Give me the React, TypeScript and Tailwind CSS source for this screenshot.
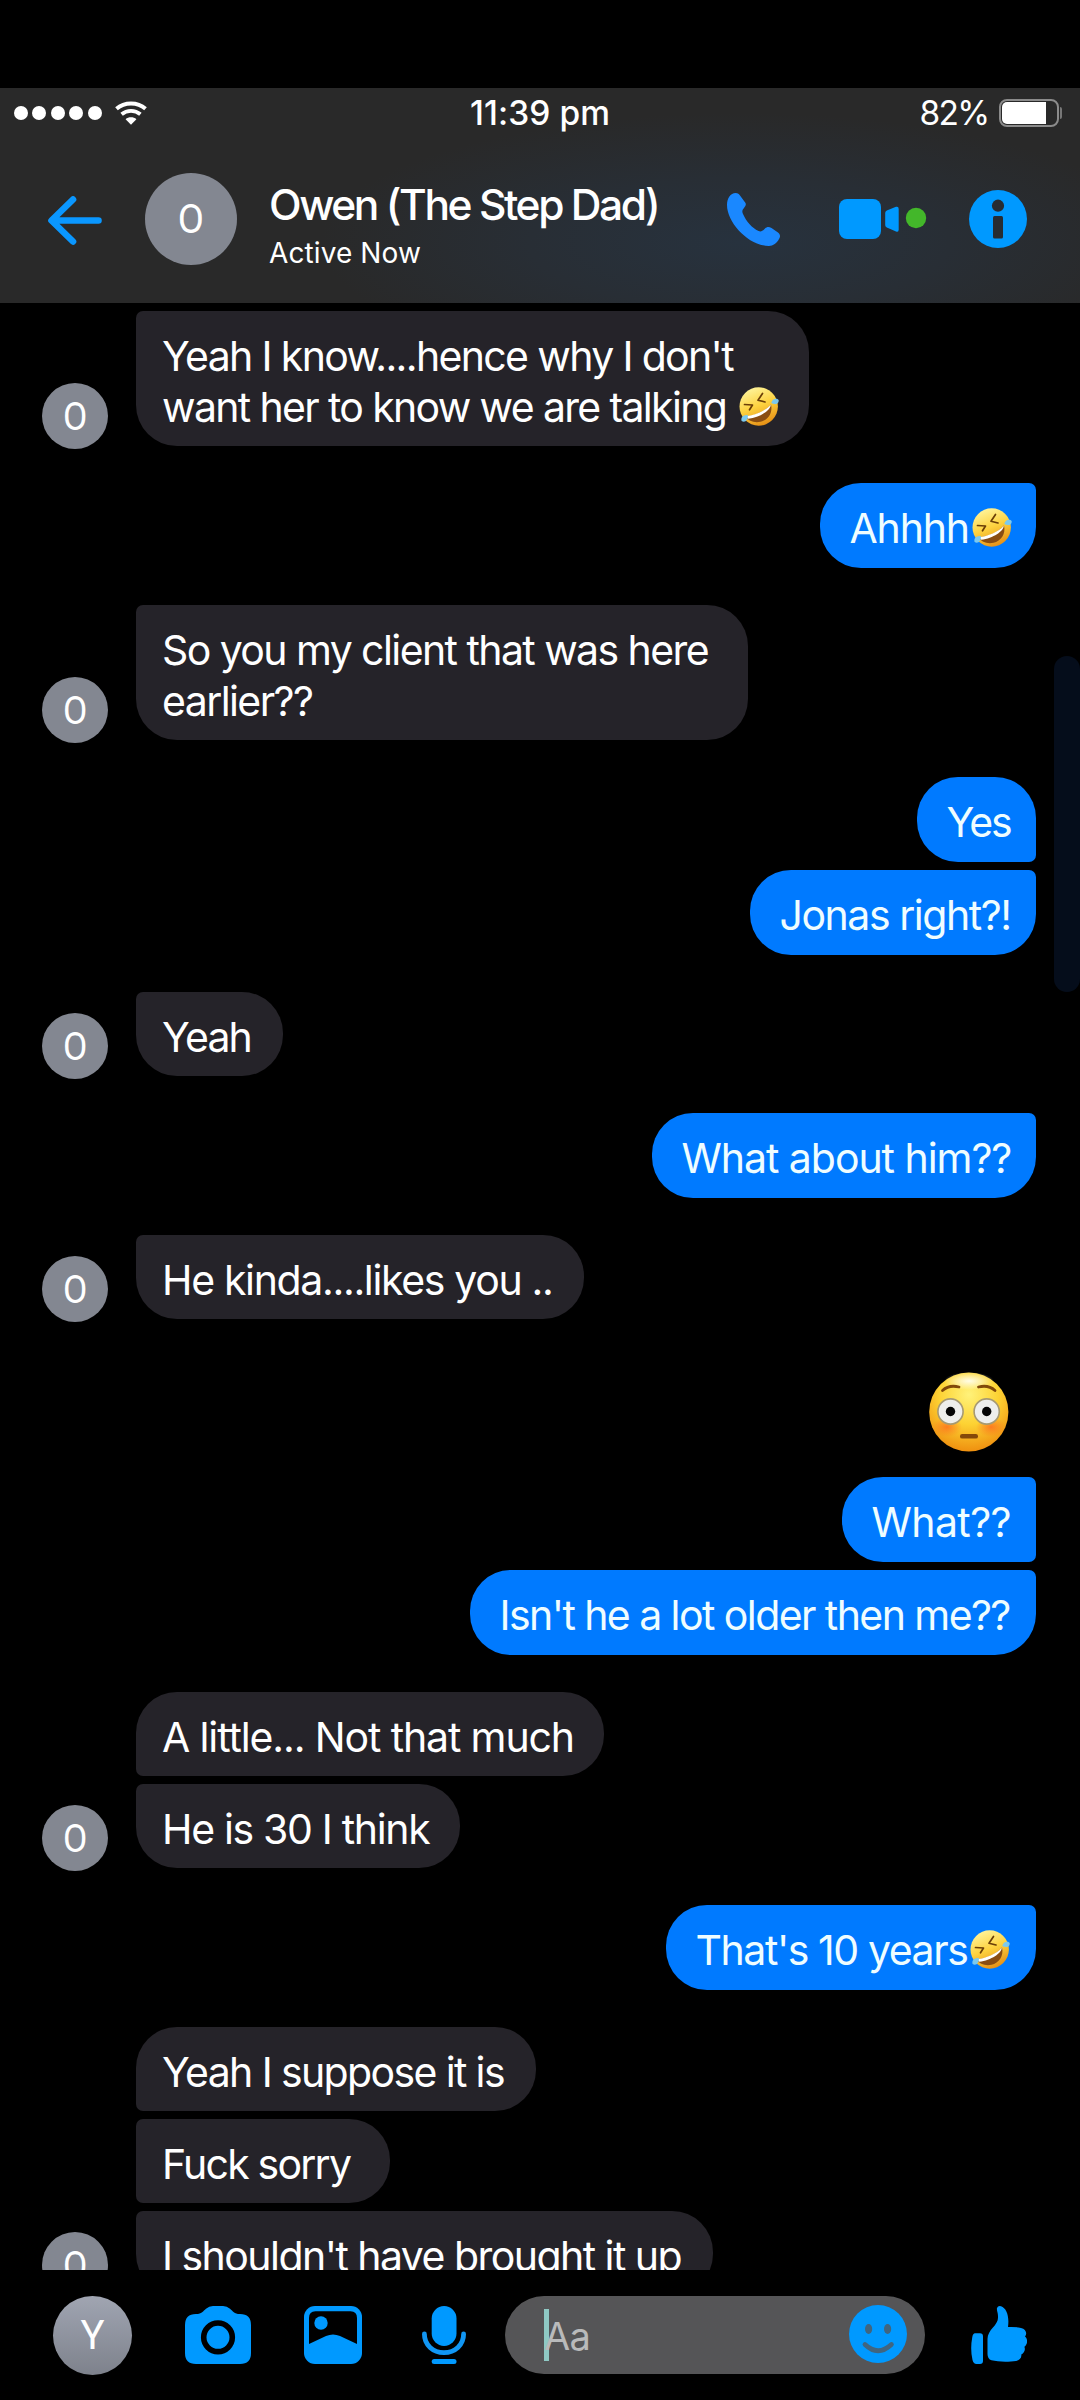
import type { ReactNode } from "react"

type Message = {
  lines: string[]
  // bubble width and letter spacing
  box: string
  emoji?: boolean
}

type Group = {
  from: "owen" | "me"
  sticker?: boolean
  messages: Message[]
}

const groups: Group[] = [
  {
    from: "owen",
    messages: [
      { lines: ["Yeah I know....hence why I don't", "want her to know we are talking "], box: "w-[673px] tracking-[-1.65px]", emoji: true },
    ],
  },
  { from: "me", messages: [{ lines: ["Ahhhh"], box: "w-[216px] tracking-[-1.2px]", emoji: true }] },
  {
    from: "owen",
    messages: [{ lines: ["So you my client that was here", "earlier??"], box: "w-[612px] tracking-[-1.58px]" }],
  },
  {
    from: "me",
    messages: [
      { lines: ["Yes"], box: "w-[119px] tracking-[-2px]" },
      { lines: ["Jonas right?!"], box: "w-[286px] tracking-[-1.45px]" },
    ],
  },
  { from: "owen", messages: [{ lines: ["Yeah"], box: "w-[147px] tracking-[-1.8px]" }] },
  { from: "me", messages: [{ lines: ["What about him??"], box: "w-[384px] tracking-[-1.05px]" }] },
  { from: "owen", messages: [{ lines: ["He kinda....likes you .."], box: "w-[448px] tracking-[-1.34px]" }] },
  {
    from: "me",
    sticker: true,
    messages: [
      { lines: ["What??"], box: "w-[194px] tracking-[-0.6px]" },
      { lines: ["Isn't he a lot older then me??"], box: "w-[566px] tracking-[-1.57px]" },
    ],
  },
  {
    from: "owen",
    messages: [
      { lines: ["A little... Not that much"], box: "w-[468px] tracking-[-1.13px]" },
      { lines: ["He is 30 I think"], box: "w-[324px] tracking-[-1.33px]" },
    ],
  },
  { from: "me", messages: [{ lines: ["That's 10 years"], box: "w-[370px] tracking-[-1.43px]", emoji: true }] },
  {
    from: "owen",
    messages: [
      { lines: ["Yeah I suppose it is"], box: "w-[400px] tracking-[-1.63px]" },
      { lines: ["Fuck sorry"], box: "w-[254px] tracking-[-1.78px]" },
      { lines: ["I shouldn't have brought it up"], box: "w-[577px] tracking-[-1.54px]" },
    ],
  },
]

function LaughEmoji() {
  return (
    <svg viewBox="0 0 40 40" className="inline-block w-10 h-10 ml-[3px] align-[-5px]" role="img" aria-label="🤣">
      <defs>
        <linearGradient id="laughFace" x1="0.25" y1="0" x2="0.65" y2="1">
          <stop offset="0" stopColor="#fff6a0" />
          <stop offset="0.5" stopColor="#fdd23f" />
          <stop offset="1" stopColor="#e58d14" />
        </linearGradient>
      </defs>
      <circle cx="19.7" cy="19.5" r="19.2" fill="url(#laughFace)" />
      <path d="M5.5 17.5 L13.5 18 L10.5 22.8" fill="none" stroke="#6b3f08" strokeWidth="1.7" strokeLinejoin="round" strokeLinecap="round" />
      <path d="M23.5 6.5 L19 13.2 L26 15" fill="none" stroke="#6b3f08" strokeWidth="1.7" strokeLinejoin="round" strokeLinecap="round" />
      <path d="M7 29.5 C15 29 27 24 32 17.5 C34 26 29 33 21.5 34.8 C15 36 9.5 34 7 29.5Z" fill="#8a4d12" />
      <path d="M7.5 29.3 C15 28.5 27 23.8 31.7 17.8 C32 23 21 30.5 9.4 31.8 C8.4 31 8 30.5 7.5 29.3Z" fill="#fff" />
      <path d="M32.3 16 C33 11.5 38 10.5 39.6 13 C40.5 16.5 36 18.5 32.3 16Z" fill="#7cc9ee" />
      <path d="M8.8 28 C4 27.5 1.5 30.5 2.6 34 C6 36 9.5 33 8.8 28Z" fill="#7cc9ee" />
    </svg>
  )
}

function FlushedEmoji() {
  return (
    <svg viewBox="0 0 80 80" className="w-20 h-20" role="img" aria-label="😳">
      <defs>
        <radialGradient id="flushedFace" cx="0.5" cy="0.28" r="0.75">
          <stop offset="0" stopColor="#fff27a" />
          <stop offset="0.5" stopColor="#fdd233" />
          <stop offset="1" stopColor="#ee8a0c" />
        </radialGradient>
        <radialGradient id="flushedShine" cx="0.5" cy="0.5" r="0.5">
          <stop offset="0" stopColor="#fffde6" />
          <stop offset="1" stopColor="#fffde6" stopOpacity="0" />
        </radialGradient>
        <radialGradient id="flushedCheek" cx="0.5" cy="0.5" r="0.5">
          <stop offset="0" stopColor="#ff5a1e" stopOpacity="0.65" />
          <stop offset="1" stopColor="#ff6a1e" stopOpacity="0" />
        </radialGradient>
      </defs>
      <circle cx="39.8" cy="40" r="39.6" fill="url(#flushedFace)" />
      <ellipse cx="40" cy="9" rx="25" ry="9" fill="url(#flushedShine)" />
      <ellipse cx="18" cy="55" rx="15" ry="10" fill="url(#flushedCheek)" />
      <ellipse cx="62" cy="55" rx="15" ry="10" fill="url(#flushedCheek)" />
      <circle cx="21.5" cy="39.5" r="12.6" fill="#eeeeec" stroke="#a79a72" strokeWidth="1.6" />
      <circle cx="57.7" cy="39.5" r="12.6" fill="#eeeeec" stroke="#a79a72" strokeWidth="1.6" />
      <circle cx="21.5" cy="39.5" r="4.7" fill="#050505" />
      <circle cx="57.7" cy="39.5" r="4.7" fill="#050505" />
      <path d="M13.5 18.5 Q20 12.5 30 15" fill="none" stroke="#81490a" strokeWidth="2.8" strokeLinecap="round" />
      <path d="M49.5 15 Q59.5 12.5 66 18.5" fill="none" stroke="#81490a" strokeWidth="2.8" strokeLinecap="round" />
      <rect x="31" y="62" width="18" height="4.6" rx="2.2" fill="#84480a" />
    </svg>
  )
}

function StatusBar() {
  return (
    <div className="h-[50px] pl-[14px] pr-[18px] flex items-center justify-between text-white text-[33.5px]">
      <div className="flex-1 flex items-center">
        <div className="flex gap-[4.4px]">
          {[...Array(5)].map((_, i) => (
            <span key={i} className="w-[14px] h-[14px] rounded-full bg-white" />
          ))}
        </div>
        <svg viewBox="0 0 32 24" className="w-8 h-6 ml-[13px]" fill="none" stroke="#fff">
          <path d="M1.5 7.7 C9.5 0.7 22.5 0.7 30.5 7.7" strokeWidth="4" />
          <path d="M6.6 13.2 C12 8.7 20 8.7 25.4 13.2" strokeWidth="3.8" />
          <path d="M10.6 18.2 C13.5 15.6 18.5 15.6 21.4 18.2 L16 23.8Z" fill="#fff" stroke="none" />
        </svg>
      </div>
      <span className="font-medium tracking-[0.1px] whitespace-nowrap translate-x-[2px]">11:39 pm</span>
      <div className="flex-1 flex items-center justify-end">
        <span className="tracking-[-1.7px] mr-[10px]">82%</span>
        <div className="w-[60px] h-7 rounded-[8px] border-2 border-[#8b8b8b] p-px">
          <div className="w-[44px] h-full rounded-l-[5px] bg-white" />
        </div>
        <div className="w-[2px] h-3 ml-[1.5px] rounded-r bg-[#777777]" />
      </div>
    </div>
  )
}

function Header() {
  return (
    <header className="h-[215px] bg-[#292929] bg-[radial-gradient(ellipse_420px_130px_at_740px_155px,#27323e,#282e35_50%,#292929)]">
      <StatusBar />
      <div className="h-[162px] pl-12 flex items-center text-white">
        <svg viewBox="0 0 54 49" className="w-[54px] h-[49px] mt-[2px]" fill="none" stroke="#0a97ff" strokeWidth="6.6" strokeLinecap="round" strokeLinejoin="round">
          <path d="M25 3.5 L3.5 24.5 L25 45.5 M4 24.5 H50.5" />
        </svg>
        <div className="w-[92px] h-[92px] ml-[43px] rounded-full bg-[#838791] flex items-center justify-center font-['Roboto'] text-[40px] pt-[2px]">
          <span className="scale-x-95">O</span>
        </div>
        <div className="ml-[32px] w-[458px] pt-[10px] whitespace-nowrap">
          <h1 className="text-[42.5px] leading-[52px] font-medium tracking-[-2.43px]">Owen (The Step Dad)</h1>
          <p className="mt-[5px] text-[28px] leading-[34px] tracking-[0.1px]">Active Now</p>
        </div>
        <svg viewBox="0 0 53 53" className="w-[53px] h-[53px]" fill="#1a88ff">
          <path d="M8.6 0 C11 0 12 1 13 2.5 L18.5 10 C19.5 12 18 13.5 17 15 C15 17 15 19 16 21 C19 28 25 35 31.5 38 C34 39 36 38 38 35.5 C40 33.5 42 33.5 44.5 35 L51 39.5 C53.5 41.5 53.5 44 52 46 C50 50 46 53 42 53 C22 53 0 30 0 12 C0 5 3.5 0 8.6 0Z" />
        </svg>
        <svg viewBox="0 0 88 40" className="w-[88px] h-10 ml-[59px]" fill="#0099ff">
          <rect width="42" height="40" rx="8" />
          <path d="M46.2 14 Q46.2 12.4 47.8 11.5 L57 7.8 Q59.7 7 59.7 10 V30.5 Q59.7 33.5 57 32.4 L47.8 28.5 Q46.2 27.8 46.2 26Z" />
          <circle cx="77" cy="19" r="10.2" fill="#43b72a" />
        </svg>
        <svg viewBox="0 0 58 58" className="w-[58px] h-[58px] ml-[42px]">
          <circle cx="29" cy="29" r="29" fill="#0099ff" />
          <circle cx="29" cy="15.7" r="6.1" fill="#272c32" />
          <rect x="24" y="26" width="10" height="22.6" rx="1.5" fill="#272c32" />
        </svg>
      </div>
    </header>
  )
}

function Bubble({ message, className }: { message: Message; className: string }) {
  const last = message.lines.length - 1
  return (
    <div className={`${className} ${message.box} pt-5 text-[41px] leading-[51px] whitespace-pre`}>
      {message.lines.map((line, i) => (
        <p key={i} className="h-[51px]">
          {line}
          {message.emoji && i === last && <LaughEmoji />}
        </p>
      ))}
    </div>
  )
}

function IncomingGroup({ messages }: { messages: Message[] }) {
  return (
    <div className="flex items-end pl-[42px]">
      <div className="w-[66px] h-[66px] mr-7 -mb-[3px] rounded-full bg-[#838791] text-white font-['Roboto'] text-[38px] flex items-center justify-center pt-[3px]">
        <span className="scale-x-93">O</span>
      </div>
      <div className="flex flex-col gap-2">
        {messages.map((message, i) => (
          <Bubble
            key={i}
            message={message}
            className={`bg-[#252329] text-white pl-[26px] pb-[13px] rounded-r-[41px] ${
              i === 0 && messages.length > 1 ? "rounded-tl-[41px]" : "rounded-tl-[7px]"
            } ${i === messages.length - 1 ? "rounded-bl-[41px]" : "rounded-bl-[7px]"}`}
          />
        ))}
      </div>
    </div>
  )
}

function OutgoingGroup({ messages, sticker }: { messages: Message[]; sticker?: boolean }) {
  return (
    <div className="flex flex-col items-end gap-2 pr-11">
      {sticker && (
        <div className="h-[113px] pt-4 pr-[27px]">
          <FlushedEmoji />
        </div>
      )}
      {messages.map((message, i) => (
        <Bubble
          key={i}
          message={message}
          className={`bg-[#007aff] text-[#effdff] pl-[29.5px] pb-[14px] rounded-l-[41px] ${
            i === 0 && messages.length > 1 && !sticker ? "rounded-tr-[41px]" : "rounded-tr-[7px]"
          } ${i === messages.length - 1 ? "rounded-br-[41px]" : "rounded-br-[7px]"}`}
        />
      ))}
    </div>
  )
}

function Icon({ viewBox, className, children }: { viewBox: string; className: string; children: ReactNode }) {
  return (
    <svg viewBox={viewBox} className={className} fill="#0099ff">
      {children}
    </svg>
  )
}

function Composer() {
  return (
    <footer className="h-[130px] pl-[53px] flex items-center bg-black">
      <div className="w-[79px] h-[79px] rounded-full bg-gradient-to-b from-[#a0a5b2] to-[#7e828c] text-white font-['Roboto'] text-[40px] flex items-center justify-center pt-[2px]">
        Y
      </div>
      <Icon viewBox="0 0 66 58" className="w-[66px] h-[58px] ml-[53px]">
        <path d="M0 19 Q0 8 11 8 C17 8 18 5 21 2.7 Q24 0 28 0 H38 Q42 0 45 2.7 C48 5 49 8 55 8 Q66 8 66 19 V47 Q66 58 55 58 H11 Q0 58 0 47Z" />
        <circle cx="33" cy="31.3" r="14.3" fill="none" stroke="#000" strokeWidth="5.6" />
      </Icon>
      <Icon viewBox="0 0 58 58" className="w-[58px] h-[58px] ml-[53px]">
        <rect width="58" height="58" rx="11" />
        <path d="M5 38 V12 Q5 5.3 11.5 5.3 H46.5 Q53 5.3 53 12 V38 L36 30 Q29 27 22 30Z" fill="#000" />
        <circle cx="17" cy="17" r="6.7" />
      </Icon>
      <Icon viewBox="0 0 44 58" className="w-[44px] h-[58px] ml-[60px]">
        <rect x="9.7" width="24.8" height="40" rx="12.4" />
        <path d="M2.4 28 C2.4 39 11 46.6 22 46.6 S41.6 39 41.6 28" fill="none" stroke="#1196f3" strokeWidth="4.8" strokeLinecap="round" />
        <rect x="9.7" y="53" width="24.8" height="5" rx="2.5" />
      </Icon>
      <div className="w-[420px] h-[78px] ml-[39px] rounded-full bg-[#555557] pl-[39px] pr-[18px] flex items-center">
        <div className="w-[5px] h-[52px] bg-[#8fc9c4]" />
        <span className="flex-1 -ml-[5px] pt-[3px] text-[38px] tracking-[-0.8px] text-[#b9babb]">Aa</span>
        <Icon viewBox="0 0 58 58" className="w-[58px] h-[58px] -mt-[2px]">
          <circle cx="29" cy="29" r="29" />
          <ellipse cx="19.6" cy="24" rx="3.6" ry="5" fill="#41657f" />
          <ellipse cx="38.6" cy="24" rx="3.6" ry="5" fill="#41657f" />
          <path d="M16 39.5 Q29 52 42.4 39.5" fill="none" stroke="#41657f" strokeWidth="4.8" strokeLinecap="round" />
        </Icon>
      </div>
      <Icon viewBox="0 0 56 58" className="w-14 h-[58px] ml-[46px]">
        <path d="M4 27.3 H9 Q12 27.3 12 30.5 V55 Q12 58 9 58 H5.5 Q2.5 58 1.5 54 Q-1 43 1.3 31 Q2 27.3 4 27.3Z" />
        <path d="M26 2 Q27 -0.5 30 0.2 C35.5 2 38.5 10 37 21 Q44 20.6 50 21.9 C55 23 56.5 27.5 54 30.5 C57 33 56.8 38 53.4 40.7 C54.6 43.5 53.5 46.8 50.3 48.6 C50.8 52 48.5 54.2 45 55 C38 56 27 56 20.5 54.3 Q16.5 53 16.5 48 V33 C16.5 28.5 19 25 21.5 22 C25 18 27.5 15 27 10 C27 7 25.5 4.5 26 2Z" />
      </Icon>
    </footer>
  )
}

export default function App() {
  return (
    <div className="relative w-[1080px] h-[2400px] overflow-hidden bg-black pt-[88px] font-['Inter','Liberation_Sans',sans-serif]">
      <Header />
      <main className="h-[1967px] overflow-hidden pt-2 flex flex-col gap-[37px]">
        {groups.map((group, i) =>
          group.from === "owen" ? (
            <IncomingGroup key={i} messages={group.messages} />
          ) : (
            <OutgoingGroup key={i} messages={group.messages} sticker={group.sticker} />
          )
        )}
      </main>
      <Composer />
      {/* Edge panel handle floating over the chat */}
      <div className="absolute right-0 top-[656px] w-[26px] h-[336px] rounded-[13px] bg-[#050d1b]" />
    </div>
  )
}
